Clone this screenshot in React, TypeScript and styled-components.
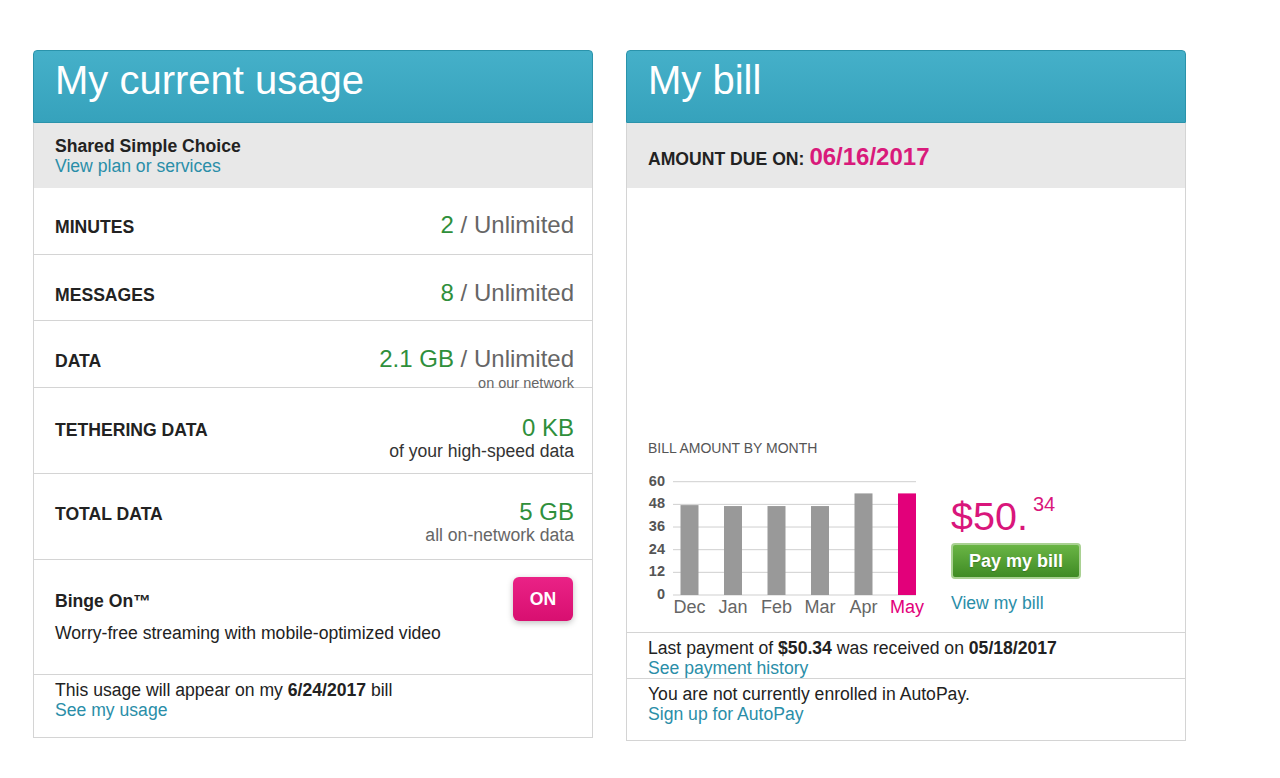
import React from "react";
import styled, { createGlobalStyle } from "styled-components";

const Global = createGlobalStyle`
  html, body { margin: 0; padding: 0; background: #fff; }
  body { font-family: "Liberation Sans", Arial, Helvetica, sans-serif; color: #222; }
  * { box-sizing: border-box; }
`;

const Page = styled.div`
  display: flex;
  align-items: flex-start;
  gap: 33px;
  padding: 50px 0 0 33px;
`;

const Panel = styled.section`
  width: 560px;
  display: flex;
  flex-direction: column;
`;

const Header = styled.h1`
  margin: 0;
  height: 73px;
  padding: 9px 21px;
  background: linear-gradient(#45b0c9, #36a2bc);
  border: 1px solid #2a93ab;
  border-radius: 4px 4px 0 0;
  color: #fff;
  font-size: 40px;
  font-weight: 400;
  line-height: 40px;
`;

const Body = styled.div`
  border: 1px solid #d4d4d4;
  border-top: none;
  display: flex;
  flex-direction: column;
`;

const GrayBox = styled.div<{ $pt: number }>`
  height: 65px;
  background: #e8e8e8;
  padding: ${(p) => p.$pt}px 18px 0 21px;
  font-size: 17.6px;
  line-height: 20px;
`;

const Strong = styled.div`
  font-weight: 700;
  color: #222;
`;

const Link = styled.a`
  display: block;
  color: #2a8ea8;
  text-decoration: none;
  font-size: 17.6px;
  line-height: 20px;
`;

const Row = styled.div<{ $h: number; $pt: number }>`
  height: ${(p) => p.$h}px;
  padding: ${(p) => p.$pt}px 18px 0 21px;
  border-bottom: 1px solid #d4d4d4;
  display: flex;
  justify-content: space-between;
  align-items: baseline;
`;

const Label = styled.div`
  font-size: 17.6px;
  line-height: 26px;
  font-weight: 700;
  color: #222;
  text-transform: uppercase;
`;

const ValueBlock = styled.div`
  text-align: right;
`;

const ValueMain = styled.div`
  font-size: 24px;
  line-height: 26px;
  color: #666;
`;

const Green = styled.span`
  color: #2f8f3b;
`;

const Sub = styled.div<{ $small?: boolean; $dark?: boolean }>`
  font-size: ${(p) => (p.$small ? "14.5px" : "17.6px")};
  line-height: ${(p) => (p.$small ? "14px" : "20px")};
  margin-top: ${(p) => (p.$small ? "4px" : "0")};
  color: ${(p) => (p.$dark ? "#333" : "#666")};
`;

const BingeRow = styled.div`
  height: 115px;
  padding: 17px 19px 0 21px;
  border-bottom: 1px solid #d4d4d4;
  display: flex;
  justify-content: space-between;
  align-items: flex-start;
`;

const BingeText = styled.div`
  padding-top: 14px;
  font-size: 17.6px;
  line-height: 20px;
`;

const BingeTitle = styled.div`
  font-weight: 700;
  margin-bottom: 12px;
`;

const OnButton = styled.button`
  width: 60px;
  height: 44px;
  border: none;
  border-radius: 6px;
  background: linear-gradient(#ea2286, #d80f70);
  color: #fff;
  font-family: inherit;
  font-size: 17.6px;
  font-weight: 700;
  box-shadow: 0 2px 6px rgba(0, 0, 0, 0.25);
  padding: 0;
`;

const Footer = styled.div<{ $h: number; $border?: boolean }>`
  height: ${(p) => p.$h}px;
  padding: 5px 18px 0 21px;
  font-size: 17.6px;
  line-height: 20px;
  border-bottom: ${(p) => (p.$border ? "1px solid #d4d4d4" : "none")};
`;

const DueBox = styled(GrayBox)`
  display: flex;
  align-items: baseline;
  gap: 5px;
`;

const DueLabel = styled.span`
  font-weight: 700;
  font-size: 17.6px;
  text-transform: uppercase;
`;

const DueDate = styled.span`
  font-weight: 700;
  font-size: 24px;
  line-height: 28px;
  color: #d91a7b;
`;

const ChartArea = styled.div`
  height: 445px;
  padding: 0 18px 12px 21px;
  border-bottom: 1px solid #d4d4d4;
  display: flex;
  flex-direction: column;
  justify-content: flex-end;
`;

const ChartTitle = styled.div`
  font-size: 14px;
  line-height: 16px;
  color: #555;
  text-transform: uppercase;
  margin-bottom: 14px;
`;

const ChartRow = styled.div`
  display: flex;
  align-items: flex-start;
  gap: 23px;
`;

const MoneyCol = styled.div`
  display: flex;
  flex-direction: column;
  align-items: flex-start;
  padding-top: 24px;
`;

const Amount = styled.div`
  font-size: 39.5px;
  line-height: 44px;
  color: #d9167b;
  white-space: nowrap;
`;

const Cents = styled.span`
  font-size: 20px;
  line-height: 20px;
  vertical-align: top;
  margin-left: 5px;
`;

const PayButton = styled.button`
  margin-top: 5px;
  width: 130px;
  height: 36px;
  border: 2px solid #a9d192;
  border-radius: 4px;
  background: linear-gradient(#6ab545, #3f8b24);
  color: #fff;
  font-family: inherit;
  font-size: 18px;
  font-weight: 700;
  padding: 0;
  text-shadow: 0 1px 1px rgba(0, 0, 0, 0.2);
`;

const ViewLink = styled(Link)`
  margin-top: 14px;
`;

const months = [
  { m: "Dec", v: 47.6 },
  { m: "Jan", v: 47.1 },
  { m: "Feb", v: 47.1 },
  { m: "Mar", v: 47.1 },
  { m: "Apr", v: 53.8 },
  { m: "May", v: 53.8, hi: true },
];

const BillChart: React.FC = () => {
  const base = 125;
  const scale = 113.3 / 60;
  const ticks = [60, 48, 36, 24, 12, 0];
  return (
    <svg width="280" height="150" viewBox="0 0 280 150">
      {ticks.map((t) => {
        const y = base - t * scale;
        return (
          <g key={t}>
            <line x1="25" x2="268" y1={y} y2={y} stroke="#cfcfcf" strokeWidth="1" />
            <text
              x="17"
              y={y + 4}
              textAnchor="end"
              fontFamily="Liberation Sans, Arial, sans-serif"
              fontSize="14.5"
              fontWeight="700"
              fill="#555"
            >
              {t}
            </text>
          </g>
        );
      })}
      {months.map((d, i) => {
        const x = 32.5 + i * 43.5;
        const h = d.v * scale;
        return (
          <g key={d.m}>
            <rect x={x} y={base - h} width="18" height={h} fill={d.hi ? "#e2007a" : "#999"} />
            <text
              x={x + 9}
              y="143"
              textAnchor="middle"
              fontFamily="Liberation Sans, Arial, sans-serif"
              fontSize="18"
              fill={d.hi ? "#e2007a" : "#666"}
            >
              {d.m}
            </text>
          </g>
        );
      })}
    </svg>
  );
};

export default function App() {
  return (
    <>
      <Global />
      <Page>
        <Panel>
          <Header>My current usage</Header>
          <Body>
            <GrayBox $pt={13}>
              <Strong>Shared Simple Choice</Strong>
              <Link href="#">View plan or services</Link>
            </GrayBox>
            <Row $h={67} $pt={24}>
              <Label>Minutes</Label>
              <ValueBlock>
                <ValueMain>
                  <Green>2</Green> / Unlimited
                </ValueMain>
              </ValueBlock>
            </Row>
            <Row $h={66} $pt={25}>
              <Label>Messages</Label>
              <ValueBlock>
                <ValueMain>
                  <Green>8</Green> / Unlimited
                </ValueMain>
              </ValueBlock>
            </Row>
            <Row $h={67} $pt={25}>
              <Label>Data</Label>
              <ValueBlock>
                <ValueMain>
                  <Green>2.1 GB</Green> / Unlimited
                </ValueMain>
                <Sub $small>on our network</Sub>
              </ValueBlock>
            </Row>
            <Row $h={86} $pt={27}>
              <Label>Tethering data</Label>
              <ValueBlock>
                <ValueMain>
                  <Green>0 KB</Green>
                </ValueMain>
                <Sub $dark>of your high-speed data</Sub>
              </ValueBlock>
            </Row>
            <Row $h={86} $pt={25}>
              <Label>Total data</Label>
              <ValueBlock>
                <ValueMain>
                  <Green>5 GB</Green>
                </ValueMain>
                <Sub>all on-network data</Sub>
              </ValueBlock>
            </Row>
            <BingeRow>
              <BingeText>
                <BingeTitle>Binge On™</BingeTitle>
                <div>Worry-free streaming with mobile-optimized video</div>
              </BingeText>
              <OnButton>ON</OnButton>
            </BingeRow>
            <Footer $h={62}>
              <div>
                This usage will appear on my <b>6/24/2017</b> bill
              </div>
              <Link href="#">See my usage</Link>
            </Footer>
          </Body>
        </Panel>

        <Panel>
          <Header>My bill</Header>
          <Body>
            <DueBox $pt={20}>
              <DueLabel>Amount due on:</DueLabel>
              <DueDate>06/16/2017</DueDate>
            </DueBox>
            <ChartArea>
              <ChartTitle>Bill amount by month</ChartTitle>
              <ChartRow>
                <BillChart />
                <MoneyCol>
                  <Amount>
                    $50.<Cents>34</Cents>
                  </Amount>
                  <PayButton>Pay my bill</PayButton>
                  <ViewLink href="#">View my bill</ViewLink>
                </MoneyCol>
              </ChartRow>
            </ChartArea>
            <Footer $h={46} $border>
              <div>
                Last payment of <b>$50.34</b> was received on <b>05/18/2017</b>
              </div>
              <Link href="#">See payment history</Link>
            </Footer>
            <Footer $h={61}>
              <div>You are not currently enrolled in AutoPay.</div>
              <Link href="#">Sign up for AutoPay</Link>
            </Footer>
          </Body>
        </Panel>
      </Page>
    </>
  );
}
